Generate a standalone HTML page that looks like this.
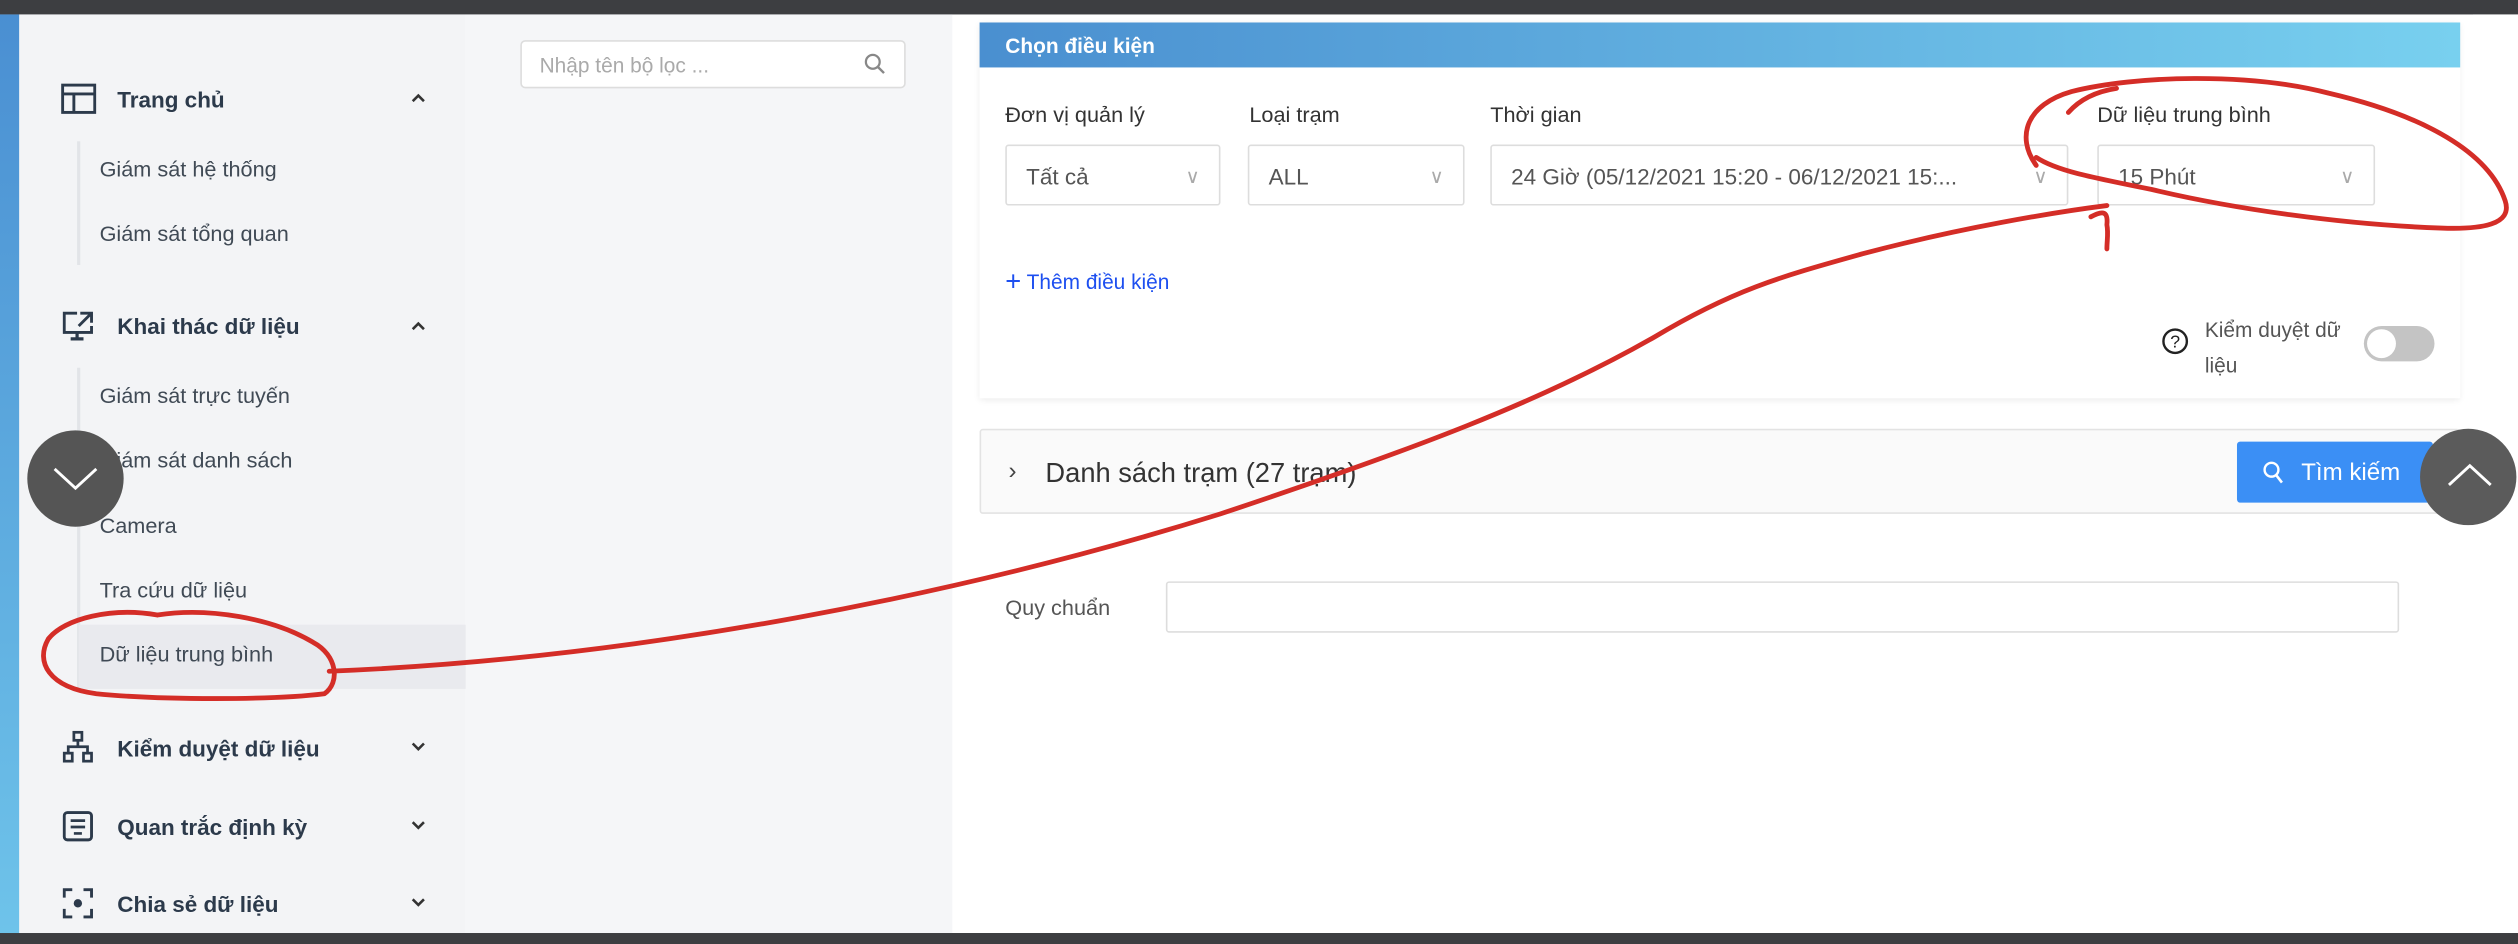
<!DOCTYPE html>
<html><head><meta charset="utf-8">
<style>
html,body{margin:0;padding:0;width:2518px;height:944px;overflow:hidden;background:#fff;}
#w{position:absolute;left:0;top:0;width:1568px;height:588px;transform:scale(1.60587);transform-origin:0 0;font-family:"Liberation Sans",sans-serif;color:#333;}
.a{position:absolute;white-space:nowrap;}
.menu{font-size:14px;color:#2c3a4b;font-weight:bold;}
.sub{font-size:13.5px;color:#404a55;}
.lbl{font-size:13.5px;color:#333;}
.sel{position:absolute;border:1px solid #ddd;border-radius:2px;background:#fff;height:38px;box-sizing:border-box;font-size:14px;color:#555;line-height:38px;padding-left:12px;}
.sel .c{position:absolute;right:12px;top:0;color:#aaa;font-size:12px;}
</style></head><body><div id="w">
<div class="a" style="left:0;top:0;width:1568px;height:9px;background:#3d3e41"></div>
<div class="a" style="left:0;top:581px;width:1568px;height:7px;background:#3d3e41"></div>
<div class="a" style="left:0;top:9px;width:12px;height:572px;background:linear-gradient(#4a8fd2,#6ec3ea)"></div>
<div class="a" style="left:12px;top:9px;width:278px;height:572px;background:#f3f4f6"></div>
<div class="a" style="left:290px;top:9px;width:303px;height:572px;background:#f5f6f8"></div>
<div class="a" style="left:1540px;top:9px;width:28px;height:572px;background:#fff"></div>
<!-- search -->
<div class="a" style="left:324px;top:25px;width:240px;height:30px;border:1px solid #ddd;border-radius:3px;background:#fff;box-sizing:border-box"></div>
<div class="a" style="left:336px;top:33px;font-size:13px;color:#aaa">Nhập tên bộ lọc ...</div>
<svg class="a" style="left:538px;top:33px" width="14" height="14" viewBox="0 0 14 14"><circle cx="5.5" cy="5.5" r="4.3" fill="none" stroke="#888" stroke-width="1.4"/><path d="M8.7 8.7L12.5 12.5" stroke="#888" stroke-width="1.5"/></svg>
<!-- menu -->
<svg class="a" style="left:38px;top:52px" width="22" height="19" viewBox="0 0 22 19"><rect x="1" y="1" width="20" height="17" fill="none" stroke="#2c3a4b" stroke-width="1.8"/><path d="M1 6.5H21M8 6.5V18" stroke="#2c3a4b" stroke-width="1.8"/></svg>
<div class="a menu" style="left:73px;top:54px">Trang chủ</div>
<svg class="a" style="left:256px;top:58px" width="9" height="6" viewBox="0 0 9 6"><path d="M1 5L4.5 1.5L8 5" fill="none" stroke="#333" stroke-width="1.6"/></svg>
<div class="a" style="left:48px;top:88px;width:2px;height:77px;background:#e2e4e8"></div>
<div class="a sub" style="left:62px;top:98px">Giám sát hệ thống</div>
<div class="a sub" style="left:62px;top:138px">Giám sát tổng quan</div>
<svg class="a" style="left:39px;top:193px" width="20" height="20" viewBox="0 0 20 20"><path d="M9 2H1V14H18V10" fill="none" stroke="#2c3a4b" stroke-width="1.8"/><path d="M11 2H18V8M18 2L10 10" fill="none" stroke="#2c3a4b" stroke-width="1.8"/><path d="M9 14V18M5 18H13" stroke="#2c3a4b" stroke-width="2"/></svg>
<div class="a menu" style="left:73px;top:195px">Khai thác dữ liệu</div>
<svg class="a" style="left:256px;top:200px" width="9" height="6" viewBox="0 0 9 6"><path d="M1 5L4.5 1.5L8 5" fill="none" stroke="#333" stroke-width="1.6"/></svg>
<div class="a" style="left:48px;top:229px;width:2px;height:200px;background:#e2e4e8"></div>
<div class="a" style="left:49px;top:389px;width:241px;height:40px;background:#e9eaee"></div>
<div class="a sub" style="left:62px;top:239px">Giám sát trực tuyến</div>
<div class="a sub" style="left:62px;top:279px">Giám sát danh sách</div>
<div class="a sub" style="left:62px;top:320px">Camera</div>
<div class="a sub" style="left:62px;top:360px">Tra cứu dữ liệu</div>
<div class="a sub" style="left:62px;top:400px">Dữ liệu trung bình</div>
<svg class="a" style="left:39px;top:455px" width="19" height="20" viewBox="0 0 19 20"><rect x="7" y="1" width="5" height="5" fill="none" stroke="#2c3a4b" stroke-width="1.7"/><rect x="1" y="14" width="5" height="5" fill="none" stroke="#2c3a4b" stroke-width="1.7"/><rect x="13" y="14" width="5" height="5" fill="none" stroke="#2c3a4b" stroke-width="1.7"/><path d="M9.5 6V10M3.5 14V10H15.5V14" fill="none" stroke="#2c3a4b" stroke-width="1.7"/></svg>
<div class="a menu" style="left:73px;top:458px">Kiểm duyệt dữ liệu</div>
<svg class="a" style="left:256px;top:462px" width="9" height="6" viewBox="0 0 9 6"><path d="M1 1L4.5 4.5L8 1" fill="none" stroke="#333" stroke-width="1.6"/></svg>
<svg class="a" style="left:39px;top:505px" width="19" height="19" viewBox="0 0 19 19"><rect x="1" y="1" width="17" height="17" rx="2" fill="none" stroke="#2c3a4b" stroke-width="1.8"/><path d="M5 6H14M5 10H14M7 14H12" stroke="#2c3a4b" stroke-width="1.7"/></svg>
<div class="a menu" style="left:73px;top:507px">Quan trắc định kỳ</div>
<svg class="a" style="left:256px;top:511px" width="9" height="6" viewBox="0 0 9 6"><path d="M1 1L4.5 4.5L8 1" fill="none" stroke="#333" stroke-width="1.6"/></svg>
<svg class="a" style="left:39px;top:553px" width="19" height="19" viewBox="0 0 19 19"><path d="M1 6V1H6M13 1H18V6M18 13V18H13M6 18H1V13" fill="none" stroke="#2c3a4b" stroke-width="1.8"/><circle cx="9.5" cy="9.5" r="2.6" fill="#2c3a4b"/></svg>
<div class="a menu" style="left:73px;top:555px">Chia sẻ dữ liệu</div>
<svg class="a" style="left:256px;top:559px" width="9" height="6" viewBox="0 0 9 6"><path d="M1 1L4.5 4.5L8 1" fill="none" stroke="#333" stroke-width="1.6"/></svg>
<!-- card -->
<div class="a" style="left:610px;top:14px;width:922px;height:234px;background:#fff;box-shadow:0 1px 4px rgba(0,0,0,0.08)"></div>
<div class="a" style="left:610px;top:14px;width:922px;height:28px;background:linear-gradient(90deg,#4a8fd0,#78d0ef)"></div>
<div class="a" style="left:626px;top:21px;font-size:13px;color:#fff;font-weight:bold">Chọn điều kiện</div>
<div class="a lbl" style="left:626px;top:64px">Đơn vị quản lý</div>
<div class="a lbl" style="left:778px;top:64px">Loại trạm</div>
<div class="a lbl" style="left:928px;top:64px">Thời gian</div>
<div class="a lbl" style="left:1306px;top:64px">Dữ liệu trung bình</div>
<div class="sel" style="left:626px;top:90px;width:134px">Tất cả<span class="c">&#8744;</span></div>
<div class="sel" style="left:777px;top:90px;width:135px">ALL<span class="c">&#8744;</span></div>
<div class="sel" style="left:928px;top:90px;width:360px">24 Giờ (05/12/2021 15:20 - 06/12/2021 15:...<span class="c">&#8744;</span></div>
<div class="sel" style="left:1306px;top:90px;width:173px">15 Phút<span class="c">&#8744;</span></div>
<div class="a" style="left:626px;top:165px;font-size:13px;color:#1d4ff0"><span style="font-size:17px;position:relative;top:1px">+</span> Thêm điều kiện</div>
<svg class="a" style="left:1346px;top:204px" width="17" height="17" viewBox="0 0 17 17"><circle cx="8.5" cy="8.5" r="7.3" fill="none" stroke="#222" stroke-width="1.5"/><text x="8.5" y="12.5" font-size="11" text-anchor="middle" font-family="Liberation Sans" fill="#222">?</text></svg>
<div class="a" style="left:1373px;top:195px;font-size:13px;color:#555;line-height:22px">Kiểm duyệt dữ<br>liệu</div>
<div class="a" style="left:1472px;top:203px;width:44px;height:22px;border-radius:11px;background:#c4c4c4"></div>
<div class="a" style="left:1474px;top:205px;width:18px;height:18px;border-radius:9px;background:#fff"></div>
<!-- collapse -->
<div class="a" style="left:610px;top:267px;width:922px;height:53px;background:#fafafa;border:1px solid #e3e3e3;box-sizing:border-box;border-radius:2px"></div>
<div class="a" style="left:628px;top:285px;font-size:15px;color:#444">&#8250;</div>
<div class="a" style="left:651px;top:285px;font-size:17px;color:#333">Danh sách trạm (27 trạm)</div>
<div class="a" style="left:1393px;top:275px;width:122px;height:38px;background:#3b8ff5;border-radius:2px"></div>
<svg class="a" style="left:1409px;top:287px" width="14" height="15" viewBox="0 0 14 15"><circle cx="5.5" cy="5.5" r="4.3" fill="none" stroke="#fff" stroke-width="1.5"/><path d="M8.5 9L12 13.5" stroke="#fff" stroke-width="1.6"/></svg>
<div class="a" style="left:1433px;top:286px;font-size:15px;color:#fff">Tìm kiếm</div>
<div class="a lbl" style="left:626px;top:371px;color:#555">Quy chuẩn</div>
<div class="a" style="left:726px;top:362px;width:768px;height:32px;border:1px solid #ddd;border-radius:2px;box-sizing:border-box"></div>
<!-- scroll buttons -->
<div class="a" style="left:17px;top:268px;width:60px;height:60px;border-radius:30px;background:#555"></div>
<svg class="a" style="left:32px;top:290px" width="30" height="16" viewBox="0 0 30 16"><path d="M2 2L15 14L28 2" fill="none" stroke="#fff" stroke-width="1.8"/></svg>
<div class="a" style="left:1507px;top:267px;width:60px;height:60px;border-radius:30px;background:#5b5b5b"></div>
<svg class="a" style="left:1523px;top:288px" width="30" height="16" viewBox="0 0 30 16"><path d="M2 14L15 2L28 14" fill="none" stroke="#fff" stroke-width="1.8"/></svg>
<!-- annotations -->
<svg class="a" style="left:0;top:0" width="1568" height="588" viewBox="0 0 1568 588">
<g fill="none" stroke="#d42d27" stroke-width="3" stroke-linecap="round">
<path d="M98 383C70 378 40 385 30 398C22 412 30 428 60 432C100 436 170 436 202 432C212 425 210 408 195 400C170 385 130 378 98 383"/>
<path d="M205 418C400 410 600 370 760 320C880 280 960 250 1030 210C1080 180 1110 172 1160 158C1220 142 1280 132 1312 128"/>
<path d="M1302 135C1308 132 1313 130 1312 140C1313 145 1312 150 1312 155"/>
<path d="M1268 103C1255 85 1262 65 1290 57C1330 47 1400 45 1450 58C1510 72 1550 95 1560 125C1565 140 1545 143 1520 142C1460 140 1390 130 1340 118C1300 110 1280 106 1268 98"/>
<path d="M1288 70C1295 62 1305 57 1318 55"/>
</g></svg>
</div></body></html>
